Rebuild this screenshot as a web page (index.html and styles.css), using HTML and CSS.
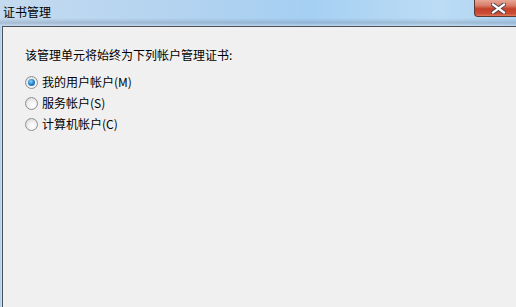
FILE: index.html
```html
<!DOCTYPE html>
<html lang="zh-CN">
<head>
<meta charset="utf-8">
<title>证书管理</title>
<link rel="stylesheet" href="styles.css">
</head>
<body>
<div class="window">
  <div class="titlebar">
    <span class="title">证书管理</span>
    <button class="close" aria-label="关闭">
      <svg width="15" height="11" viewBox="0 0 15 11">
        <path d="M2 1.5 L13 9.5 M13 1.5 L2 9.5" stroke="#3a3a4a" stroke-width="4" stroke-linecap="square"/>
        <path d="M2 1.5 L13 9.5 M13 1.5 L2 9.5" stroke="#ffffff" stroke-width="2.2" stroke-linecap="square"/>
      </svg>
    </button>
  </div>
  <div class="frame">
    <div class="content">
      <p class="prompt">该管理单元将始终为下列帐户管理证书:</p>
      <div class="options">
        <label class="option"><span class="radio checked"></span>我的用户帐户(M)</label>
        <label class="option"><span class="radio"></span>服务帐户(S)</label>
        <label class="option"><span class="radio"></span>计算机帐户(C)</label>
      </div>
    </div>
  </div>
</div>
</body>
</html>
```

FILE: styles.css
```css
html, body {
  margin: 0;
  padding: 0;
  width: 516px;
  height: 307px;
  overflow: hidden;
}

body {
  font-family: "Noto Sans CJK SC", "Liberation Sans", sans-serif;
  font-size: 12px;
  color: #000;
}

.window {
  width: 516px;
  height: 307px;
  display: flex;
  flex-direction: column;
  background: #b9d4ee;
}

.titlebar {
  height: 26px;
  flex: none;
  display: flex;
  align-items: flex-start;
  background:
    linear-gradient(180deg, rgba(255,255,255,0) 0%, rgba(255,255,255,0) 70%, rgba(110,130,155,0.35) 88%, rgba(200,220,240,0.6) 100%),
    linear-gradient(90deg, #c4daef 0%, #b3d3f0 35%, #a5cff2 60%, #bcdcf5 85%, #aed3f1 100%);
}

.title {
  padding: 4px 0 0 3px;
  line-height: 16px;
  font-size: 12px;
  color: #000;
}

.close {
  margin-left: auto;
  width: 42px;
  height: 17px;
  padding: 0;
  border: 1px solid #5b3a36;
  border-top: none;
  border-right: none;
  border-radius: 0 0 0 4px;
  background: linear-gradient(180deg, #e8a796 0%, #d77c68 35%, #c3412b 55%, #cc4c36 85%, #e07a5a 100%);
  display: flex;
  align-items: center;
  justify-content: center;
  padding-left: 5px;
}

.close svg {
  display: block;
}

.frame {
  flex: 1;
  display: flex;
  padding-left: 2px;
  background: linear-gradient(90deg, #a9c8e8 0, #d4e5f5 2px);
}

.content {
  flex: 1;
  background: #f0f0f0;
  border-left: 1px solid #4c5056;
  border-top: 1px solid #4c5056;
  padding: 20px 0 0 22px;
}

.prompt {
  margin: 0;
  line-height: 16px;
}

.options {
  margin-top: 11px;
  display: flex;
  flex-direction: column;
  gap: 5px;
}

.option {
  display: flex;
  align-items: center;
  gap: 4px;
  height: 16px;
  line-height: 16px;
}

.radio {
  width: 11px;
  height: 11px;
  border-radius: 50%;
  border: 1px solid #8e8f8f;
  background: radial-gradient(circle at 60% 65%, #ffffff 0%, #f2f2f2 40%, #d4d4d4 100%);
  box-sizing: content-box;
  position: relative;
  flex: none;
}

.radio.checked::after {
  content: "";
  position: absolute;
  left: 2px;
  top: 2px;
  width: 7px;
  height: 7px;
  border-radius: 50%;
  background: radial-gradient(circle at 40% 35%, #8fd2f6 0%, #2a8ad4 45%, #134e8a 100%);
}
```
